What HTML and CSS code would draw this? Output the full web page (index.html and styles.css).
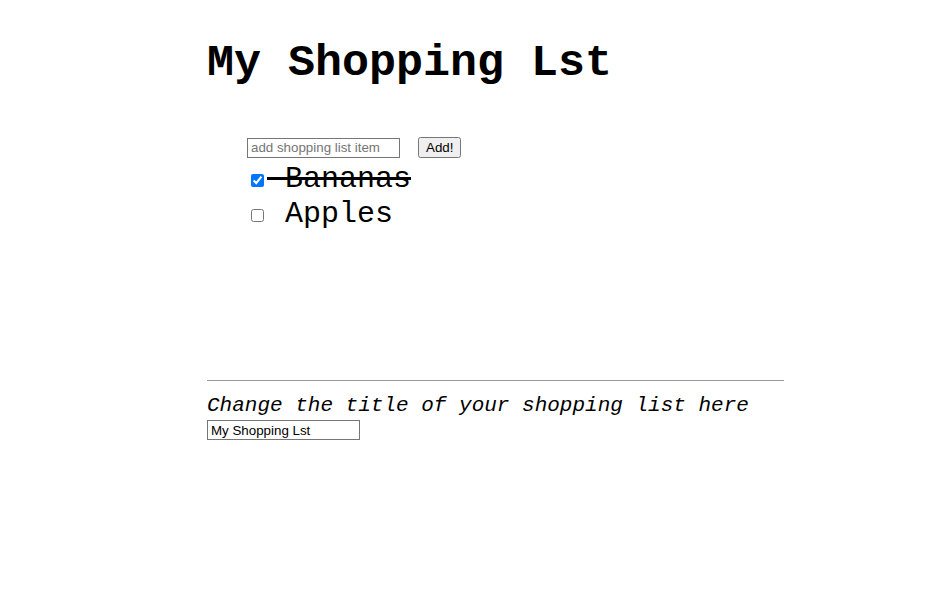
FILE: index.html
```html
<!DOCTYPE html>
<html>
<head>
<meta charset="utf-8">
<link rel="stylesheet" href="styles.css">
</head>
<body>
<div class="app">
  <h1 class="title">My Shopping Lst</h1>
  <ul class="list">
    <li class="add-row"><input class="add-input" type="text" placeholder="add shopping list item"> <button class="add-btn">Add!</button></li>
    <li class="item done"><input type="checkbox" checked><span class="label"> Bananas</span></li>
    <li class="item"><input type="checkbox"><span class="label"> Apples</span></li>
  </ul>
  <hr class="divider">
  <div class="change">
    <em class="change-label">Change the title of your shopping list here</em>
    <div class="title-row"><input class="title-input" type="text" value="My Shopping Lst"></div>
  </div>
</div>
</body>
</html>
```

FILE: styles.css
```css
body {
  margin: 8px;
  font-family: "Liberation Mono", "Courier New", monospace;
  background: #fff;
  color: #000;
}
.app {
  margin-left: 199px;
  width: 577px;
}
.title {
  font-size: 45px;
  font-weight: bold;
  margin: 30px 0 0 0;
}
.list {
  list-style: none;
  padding-left: 40px;
  margin: 38px 0 0 0;
  font-size: 30px;
}
.add-row {
  line-height: 35px;
}
.item {
  line-height: 35px;
}
.add-input, .add-btn, .title-input {
  font-family: Arial, "Liberation Sans", sans-serif;
  font-size: 13.33px;
}
.add-input, .title-input {
  box-sizing: border-box;
  width: 153px;
  height: 20px;
  border: 1px solid #767676;
  padding: 1px 3px;
}
.add-input::placeholder {
  color: #757575;
}
.done .label {
  text-decoration: line-through;
}
.divider {
  margin: 148px 0 0 0;
  border: none;
  border-top: 1px solid #999;
  height: 0;
}
.change {
  margin-top: 13px;
}
.change-label {
  font-size: 21px;
  font-style: italic;
}
.title-row {
  margin-top: 3px;
}
```
